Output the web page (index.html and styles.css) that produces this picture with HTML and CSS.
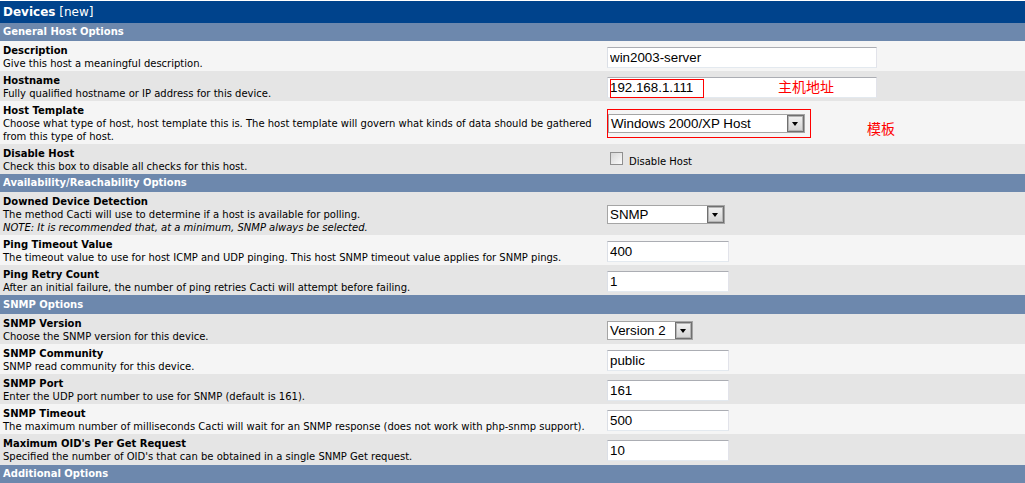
FILE: index.html
```html
<!DOCTYPE html>
<html lang="en">
<head>
    <meta charset="UTF-8">
    <title>Devices [new]</title>
    <link rel="stylesheet" href="styles.css">
</head>
<body>
    <div class="title-bar"><b>Devices</b> [new]</div>

    <table class="form">
        <!-- General Host Options -->
        <tr class="section"><td colspan="2">General Host Options</td></tr>
        <tr class="light">
            <td class="desc"><b>Description</b><br>Give this host a meaningful description.</td>
            <td><input class="text-field" type="text" value="win2003-server"></td>
        </tr>
        <tr class="dark">
            <td class="desc"><b>Hostname</b><br>Fully qualified hostname or IP address for this device.</td>
            <td>
                <span class="field-wrap">
                    <input class="text-field" type="text" value="192.168.1.111">
                    <span class="mark-box"></span>
                    <span class="note">主机地址</span>
                </span>
            </td>
        </tr>
        <tr class="light">
            <td class="desc"><b>Host Template</b><br>Choose what type of host, host template this is. The host template will govern what kinds of data should be gathered<br>from this type of host.</td>
            <td>
                <div class="marked">
                    <div class="red-frame">
                        <span class="select-box wide"><span class="value">Windows 2000/XP Host</span><span class="arrow"></span></span>
                    </div>
                    <span class="note-inline">模板</span>
                </div>
            </td>
        </tr>
        <tr class="dark">
            <td class="desc"><b>Disable Host</b><br>Check this box to disable all checks for this host.</td>
            <td><span class="checkbox"></span>Disable Host</td>
        </tr>

        <!-- Availability/Reachability Options -->
        <tr class="section"><td colspan="2">Availability/Reachability Options</td></tr>
        <tr class="dark">
            <td class="desc"><b>Downed Device Detection</b><br>The method Cacti will use to determine if a host is available for polling.<br><i>NOTE: It is recommended that, at a minimum, SNMP always be selected.</i></td>
            <td><span class="select-box mid"><span class="value">SNMP</span><span class="arrow"></span></span></td>
        </tr>
        <tr class="light">
            <td class="desc"><b>Ping Timeout Value</b><br>The timeout value to use for host ICMP and UDP pinging. This host SNMP timeout value applies for SNMP pings.</td>
            <td><input class="text-field short" type="text" value="400"></td>
        </tr>
        <tr class="dark">
            <td class="desc"><b>Ping Retry Count</b><br>After an initial failure, the number of ping retries Cacti will attempt before failing.</td>
            <td><input class="text-field short" type="text" value="1"></td>
        </tr>

        <!-- SNMP Options -->
        <tr class="section tall"><td colspan="2">SNMP Options</td></tr>
        <tr class="dark">
            <td class="desc"><b>SNMP Version</b><br>Choose the SNMP version for this device.</td>
            <td><span class="select-box narrow"><span class="value">Version 2</span><span class="arrow"></span></span></td>
        </tr>
        <tr class="light">
            <td class="desc"><b>SNMP Community</b><br>SNMP read community for this device.</td>
            <td><input class="text-field short" type="text" value="public"></td>
        </tr>
        <tr class="dark">
            <td class="desc"><b>SNMP Port</b><br>Enter the UDP port number to use for SNMP (default is 161).</td>
            <td><input class="text-field short" type="text" value="161"></td>
        </tr>
        <tr class="light">
            <td class="desc"><b>SNMP Timeout</b><br>The maximum number of milliseconds Cacti will wait for an SNMP response (does not work with php-snmp support).</td>
            <td><input class="text-field short" type="text" value="500"></td>
        </tr>
        <tr class="dark">
            <td class="desc last"><b>Maximum OID's Per Get Request</b><br>Specified the number of OID's that can be obtained in a single SNMP Get request.</td>
            <td><input class="text-field short" type="text" value="10"></td>
        </tr>

        <!-- Additional Options -->
        <tr class="section"><td colspan="2">Additional Options</td></tr>
    </table>
</body>
</html>
```

FILE: styles.css
```css
body {
    margin: 1px 0 0;
    font-family: "DejaVu Sans", Verdana, sans-serif;
    font-size: 10px;
    color: #000;
    background-color: #fff;
}

.title-bar {
    background-color: #00438c;
    color: #fff;
    font-size: 12px;
    height: 22px;
    line-height: 23px;
    padding: 0 3px;
}

.form {
    width: 100%;
    border-collapse: collapse;
}

.form td {
    padding: 3px 3px 1px;
    line-height: 13px;
    vertical-align: middle;
}

.form td.desc {
    width: 598px;
    white-space: nowrap;
}

.form td.last {
    padding-bottom: 2px;
}

.section td {
    background-color: #6d88ad;
    color: #fff;
    font-weight: bold;
    height: 18px;
    line-height: 18px;
    padding: 0 3px;
}

.section.tall td {
    height: 19px;
}

.light td {
    background-color: #f5f5f5;
}

.dark td {
    background-color: #e5e5e5;
}

.text-field {
    box-sizing: border-box;
    width: 270px;
    height: 21px;
    margin: 0;
    padding: 0 2px;
    border: 1px solid;
    border-color: #abadb3 #e2e3ea #e3e9ef #dbdfe6;
    background-color: #fff;
    color: #000;
    font-family: "Liberation Sans", Arial, sans-serif;
    font-size: 10pt;
    vertical-align: middle;
}

.text-field.short {
    width: 122px;
}

/* annotation over the hostname field */
.field-wrap {
    position: relative;
    display: inline-block;
    vertical-align: middle;
}

.field-wrap .text-field {
    display: block;
}

.mark-box {
    position: absolute;
    left: 3px;
    top: 2px;
    width: 92px;
    height: 17px;
    border: 1px solid #ff0000;
}

.note {
    position: absolute;
    left: 171px;
    top: 0;
    color: #ff0000;
    font-family: "Noto Sans CJK SC", sans-serif;
    font-size: 14px;
    line-height: 18px;
    white-space: nowrap;
}

.marked {
    display: flex;
    align-items: center;
}

.red-frame {
    display: flex;
    margin: 1px;
    padding: 4px 5px 4px 0;
    outline: 1px solid #ff0000;
}

.note-inline {
    margin-left: 56px;
    margin-top: 9px;
    color: #ff0000;
    font-family: "Noto Sans CJK SC", sans-serif;
    font-size: 14px;
    line-height: 16px;
}

.select-box {
    display: inline-flex;
    box-sizing: border-box;
    height: 19px;
    border: 1px solid #a5a5a5;
    background-color: #fff;
    font-family: "Liberation Sans", Arial, sans-serif;
    font-size: 10pt;
    vertical-align: middle;
}

.select-box.wide {
    width: 197px;
}

.select-box.mid {
    width: 118px;
}

.select-box.narrow {
    width: 86px;
}

.select-box .value {
    flex: 1;
    padding: 0 2px;
    line-height: 17px;
    white-space: nowrap;
}

.select-box .arrow {
    position: relative;
    width: 17px;
    box-sizing: border-box;
    border: 1px solid #707070;
    box-shadow: inset 0 0 0 1px #b4b4b4;
    background: linear-gradient(#f2f2f2, #d2d2d2);
}

.select-box .arrow::after {
    content: "";
    position: absolute;
    left: 4px;
    top: 6px;
    border-left: 3.5px solid transparent;
    border-right: 3.5px solid transparent;
    border-top: 4px solid #000;
}

.checkbox {
    display: inline-block;
    width: 13px;
    height: 13px;
    box-sizing: border-box;
    margin: 0 6px 0 3px;
    border: 1px solid #8f8f8f;
    background: linear-gradient(135deg, #d6d6d6, #fbfbfb);
}
```
